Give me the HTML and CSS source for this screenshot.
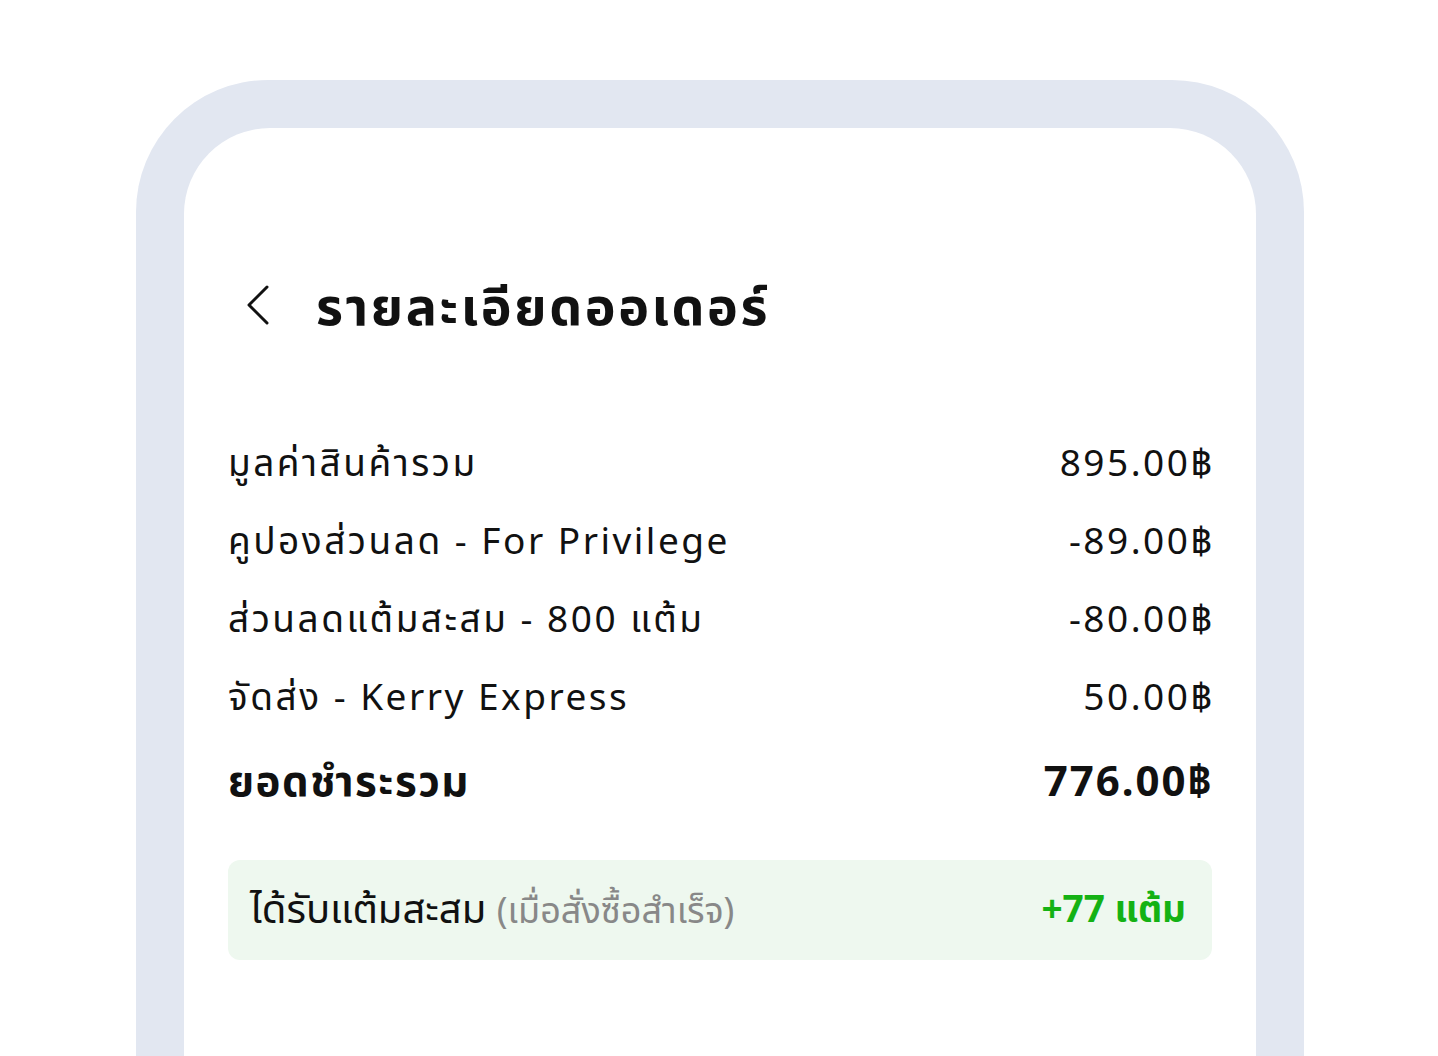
FILE: index.html
```html
<!DOCTYPE html>
<html lang="th">
<head>
    <meta charset="UTF-8">
    <meta name="viewport" content="width=device-width, initial-scale=1.0">
    <title>รายละเอียดออเดอร์</title>
    <link rel="stylesheet" href="styles.css">
</head>
<body>
    <div class="phone">
        <div class="screen">
            <div class="header">
                <svg class="back" width="28" height="42" viewBox="0 0 28 42">
                    <path d="M23 3 L5 21 L23 39" fill="none" stroke="#111" stroke-width="3" stroke-linecap="round" stroke-linejoin="round"/>
                </svg>
                <h1 class="title">รายละเอียดออเดอร์</h1>
            </div>

            <div class="summary">
                <div class="row">
                    <span>มูลค่าสินค้ารวม</span>
                    <span class="amount">895.00฿</span>
                </div>
                <div class="row">
                    <span>คูปองส่วนลด - For Privilege</span>
                    <span class="amount">-89.00฿</span>
                </div>
                <div class="row">
                    <span>ส่วนลดแต้มสะสม - 800 แต้ม</span>
                    <span class="amount">-80.00฿</span>
                </div>
                <div class="row">
                    <span>จัดส่ง - Kerry Express</span>
                    <span class="amount">50.00฿</span>
                </div>
                <div class="row total">
                    <span>ยอดชำระรวม</span>
                    <span class="amount">776.00฿</span>
                </div>
            </div>

            <div class="points">
                <div class="points-label">ได้รับแต้มสะสม <span class="note">(เมื่อสั่งซื้อสำเร็จ)</span></div>
                <div class="points-value">+77 แต้ม</div>
            </div>
        </div>
    </div>
</body>
</html>
```

FILE: styles.css
```css
* {
    margin: 0;
    padding: 0;
    box-sizing: border-box;
}

body {
    background: #fff;
    font-family: "Noto Sans", "Noto Sans Thai", "Loma", sans-serif;
    color: #111;
    height: 1056px;
    overflow: hidden;
    padding: 80px 134px 0 136px;
}

.phone {
    background: #e2e7f1;
    border-radius: 132px 132px 0 0;
    padding: 48px 48px 0 48px;
    height: 976px;
}

.screen {
    background: #fff;
    border-radius: 86px 86px 0 0;
    height: 100%;
    padding: 147px 44px 0 44px;
}

.header {
    display: flex;
    align-items: center;
    gap: 44px;
    padding-left: 16px;
}

.back {
    display: block;
}

.title {
    font-size: 52px;
    font-weight: 700;
    line-height: 60px;
    letter-spacing: 2.6px;
}

.summary {
    margin-top: 88px;
}

.row {
    display: flex;
    justify-content: space-between;
    font-size: 37px;
    line-height: 78px;
    letter-spacing: 2.5px;
}

.amount {
    margin-right: -2.5px;
}

.row.total {
    font-size: 42px;
    font-weight: 700;
    line-height: 90px;
    letter-spacing: 1.5px;
}

.row.total .amount {
    letter-spacing: 2px;
    margin-right: -2px;
}

.points {
    margin-top: 35px;
    background: #eef8ef;
    border-radius: 12px;
    height: 100px;
    display: flex;
    align-items: center;
    justify-content: space-between;
    padding: 0 26px 0 22px;
    font-size: 40px;
}

.note {
    color: #888;
    font-size: 36px;
}

.points-value {
    color: #14b214;
    font-weight: 700;
    font-size: 37px;
}
```
